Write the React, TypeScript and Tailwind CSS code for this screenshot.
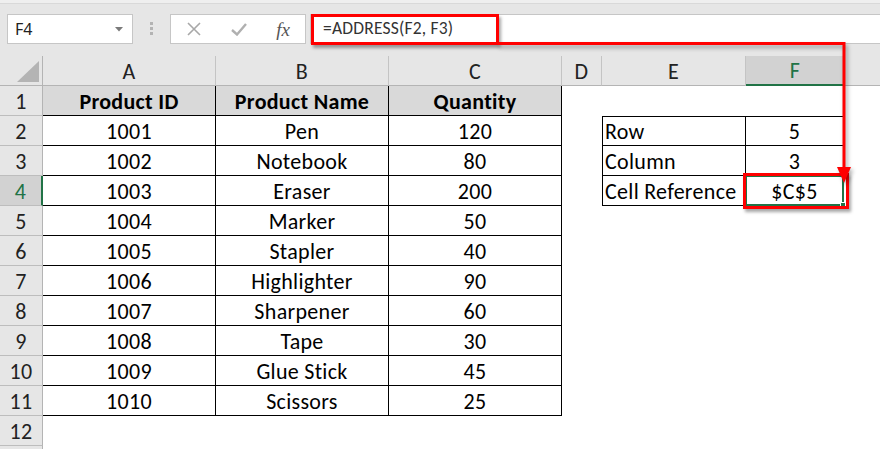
import React from "react";

const rows: [string, string, string][] = [
  ["1001", "Pen", "120"],
  ["1002", "Notebook", "80"],
  ["1003", "Eraser", "200"],
  ["1004", "Marker", "50"],
  ["1005", "Stapler", "40"],
  ["1006", "Highlighter", "90"],
  ["1007", "Sharpener", "60"],
  ["1008", "Tape", "30"],
  ["1009", "Glue Stick", "45"],
  ["1010", "Scissors", "25"],
];

const side: Record<number, [string, string]> = {
  2: ["Row", "5"],
  3: ["Column", "3"],
  4: ["Cell Reference", "$C$5"],
};

const font = { fontFamily: "Carlito, Calibri, Lato, 'Liberation Sans', sans-serif" };

function RowHeader({ n, selected }: { n: number; selected?: boolean }) {
  const label = n <= 12 ? n : "";
  return selected ? (
    <div className="w-[43px] shrink-0 h-full flex items-center justify-center pt-[2px] bg-[#d2d2d2] text-[#217346] border-b border-[#bdbdbd] border-r-2 border-r-[#217346] box-border">
      {label}
    </div>
  ) : (
    <div className="w-[43px] shrink-0 h-full flex items-center justify-center pt-[2px] bg-[#e6e6e6] text-[#222] border-b border-[#bdbdbd] border-r border-r-[#b4b4b4] box-border">
      {label}
    </div>
  );
}

function SheetRow({ n }: { n: number }) {
  const isHeader = n === 1;
  const data = n >= 2 && n <= 11 ? rows[n - 2] : null;
  const inTable = n >= 1 && n <= 11;
  const sd = side[n];
  return (
    <div className="flex h-[30px] shrink-0">
      <RowHeader n={n} selected={n === 4} />
      {inTable ? (
        <>
          {[0, 1, 2].map((i) => (
            <div
              key={i}
              className={
                isHeader
                  ? "w-[173px] shrink-0 h-full flex items-center justify-center pt-[2px] border-r border-b border-black bg-[#d9d9d9] font-bold text-black box-border"
                  : "w-[173px] shrink-0 h-full flex items-center justify-center pt-[2px] border-r border-b border-black text-black box-border"
              }
            >
              {isHeader
                ? ["Product ID", "Product Name", "Quantity"][i]
                : data![i]}
            </div>
          ))}
        </>
      ) : (
        <>
          <div className="w-[173px] shrink-0" />
          <div className="w-[173px] shrink-0" />
          <div className="w-[173px] shrink-0" />
        </>
      )}
      <div className="w-[40px] shrink-0" />
      {sd ? (
        <>
          <div
            className={
              n === 2
                ? "w-[144px] shrink-0 h-full flex items-center pl-[2px] pt-[2px] border-l border-t border-r border-b border-black text-black box-border"
                : "w-[144px] shrink-0 h-full flex items-center pl-[2px] pt-[2px] border-l border-r border-b border-black text-black box-border"
            }
          >
            {sd[0]}
          </div>
          <div
            className={
              n === 2
                ? "relative w-[98px] shrink-0 h-full flex items-center justify-center pt-[2px] border-t border-r border-b border-black text-black box-border"
                : "relative w-[98px] shrink-0 h-full flex items-center justify-center pt-[2px] border-r border-b border-black text-black box-border"
            }
          >
            {sd[1]}
            {n === 4 && (
              <>
                <div className="absolute left-[-1px] top-[-1px] right-[-1px] bottom-[-1px] border-2 border-[#217346]" />
                <div className="absolute right-[-3px] bottom-[-3px] w-[6px] h-[6px] bg-[#217346] border border-white" />
              </>
            )}
          </div>
        </>
      ) : (
        <>
          <div className="w-[144px] shrink-0" />
          <div className="w-[98px] shrink-0" />
        </>
      )}
      <div className="flex-1" />
    </div>
  );
}

export default function App() {
  const colHeaders: [string, number][] = [
    ["A", 173],
    ["B", 173],
    ["C", 173],
    ["D", 40],
    ["E", 144],
  ];
  return (
    <div
      className="relative w-[880px] h-[449px] overflow-hidden bg-white text-[22px] tracking-[0.3px] leading-none"
      style={font}
    >
      {/* Formula bar */}
      <div className="h-[56px] bg-[#e6e6e6] flex flex-col tracking-normal">
        <div className="h-[3px] bg-[#efefef] border-b border-[#d9d9d9] box-content" />
        <div className="flex items-start pt-[10px]">
          <div
            className="ml-[7px] w-[126px] h-[30px] bg-white border border-[#c6c6c6] flex items-center justify-between pl-[7px] pr-[9px] box-border text-[16px] text-[#222]"
            style={{ fontFamily: "'Noto Sans', 'Open Sans', sans-serif" }}
          >
            <span>F4</span>
            <svg width="8" height="5" viewBox="0 0 8 5">
              <path d="M0 0 L8 0 L4 4.5 Z" fill="#7a7a7a" />
            </svg>
          </div>
          <div className="ml-[17px] mt-[8px] flex flex-col gap-[2px]">
            <div className="w-[3px] h-[3px] bg-[#b3b3b3]" />
            <div className="w-[3px] h-[3px] bg-[#b3b3b3]" />
            <div className="w-[3px] h-[3px] bg-[#b3b3b3]" />
          </div>
          <div className="ml-[17px] w-[136px] h-[30px] bg-white border border-[#c6c6c6] box-border flex items-center">
            <div className="w-[46px] flex justify-center">
              <svg width="14" height="14" viewBox="0 0 14 14">
                <path d="M1 1 L13 13 M13 1 L1 13" stroke="#a8a8a8" strokeWidth="1.6" fill="none" />
              </svg>
            </div>
            <div className="w-[44px] flex justify-center">
              <svg width="16" height="13" viewBox="0 0 16 13">
                <path d="M1 7 L6 11.5 L15 1" stroke="#b0b0b0" strokeWidth="2.4" fill="none" />
              </svg>
            </div>
            <div
              className="w-[44px] flex justify-center italic text-[19px] text-[#555]"
              style={{ fontFamily: "'Liberation Serif', 'DejaVu Serif', serif" }}
            >
              <span>fx</span>
            </div>
          </div>
          <div className="ml-[4px] flex-1 h-[30px] bg-white border-y border-l border-[#c6c6c6] box-border flex items-center pl-[12px] text-[17.5px] tracking-[0.2px] text-[#333]">
            =ADDRESS(F2, F3)
          </div>
        </div>
      </div>

      {/* Column headers */}
      <div className="flex h-[30px]">
        <div className="w-[43px] shrink-0 h-full bg-[#e6e6e6] border-r border-b border-[#b4b4b4] box-border relative">
          <svg className="absolute left-[17px] top-[5px]" width="22" height="21" viewBox="0 0 22 21">
            <path d="M22 0 L22 21 L0 21 Z" fill="#b4b4b4" />
          </svg>
        </div>
        {colHeaders.map(([l, w]) => (
          <div
            key={l}
            className="shrink-0 h-full bg-[#e6e6e6] border-r border-b border-r-[#c4c4c4] border-b-[#b4b4b4] box-border flex items-center justify-center text-[#222] pt-[2px]"
            style={{ width: w }}
          >
            {l}
          </div>
        ))}
        <div className="w-[98px] shrink-0 h-full bg-[#d2d2d2] border-b-2 border-[#217346] box-border flex items-center justify-center text-[#217346] pt-[2px]">
          F
        </div>
        <div className="flex-1 h-full bg-[#e6e6e6] border-b border-[#b4b4b4] box-border" />
      </div>

      {/* Rows */}
      <div className="flex flex-col">
        {Array.from({ length: 13 }, (_, i) => (
          <SheetRow key={i} n={i + 1} />
        ))}
      </div>

      {/* Red highlight boxes and arrow */}
      <div className="absolute left-[311px] top-[14px] w-[188px] h-[31px] border-[3px] border-[#ff0000] shadow-[2px_3px_3px_rgba(0,0,0,0.35)]" />
      <div className="absolute left-[743px] top-[173px] w-[106px] h-[36px] border-[3px] border-[#ff0000] shadow-[2px_3px_3px_rgba(0,0,0,0.35)]" />
      <svg
        className="absolute left-0 top-0 pointer-events-none"
        width="880"
        height="449"
        viewBox="0 0 880 449"
        style={{ filter: "drop-shadow(2px 3px 2px rgba(0,0,0,0.35))" }}
      >
        <path d="M498 43.5 L844 43.5 L844 170" stroke="#ff0000" strokeWidth="3" fill="none" />
        <path d="M837 167 L851 167 L844 183 Z" fill="#ff0000" />
      </svg>
    </div>
  );
}
